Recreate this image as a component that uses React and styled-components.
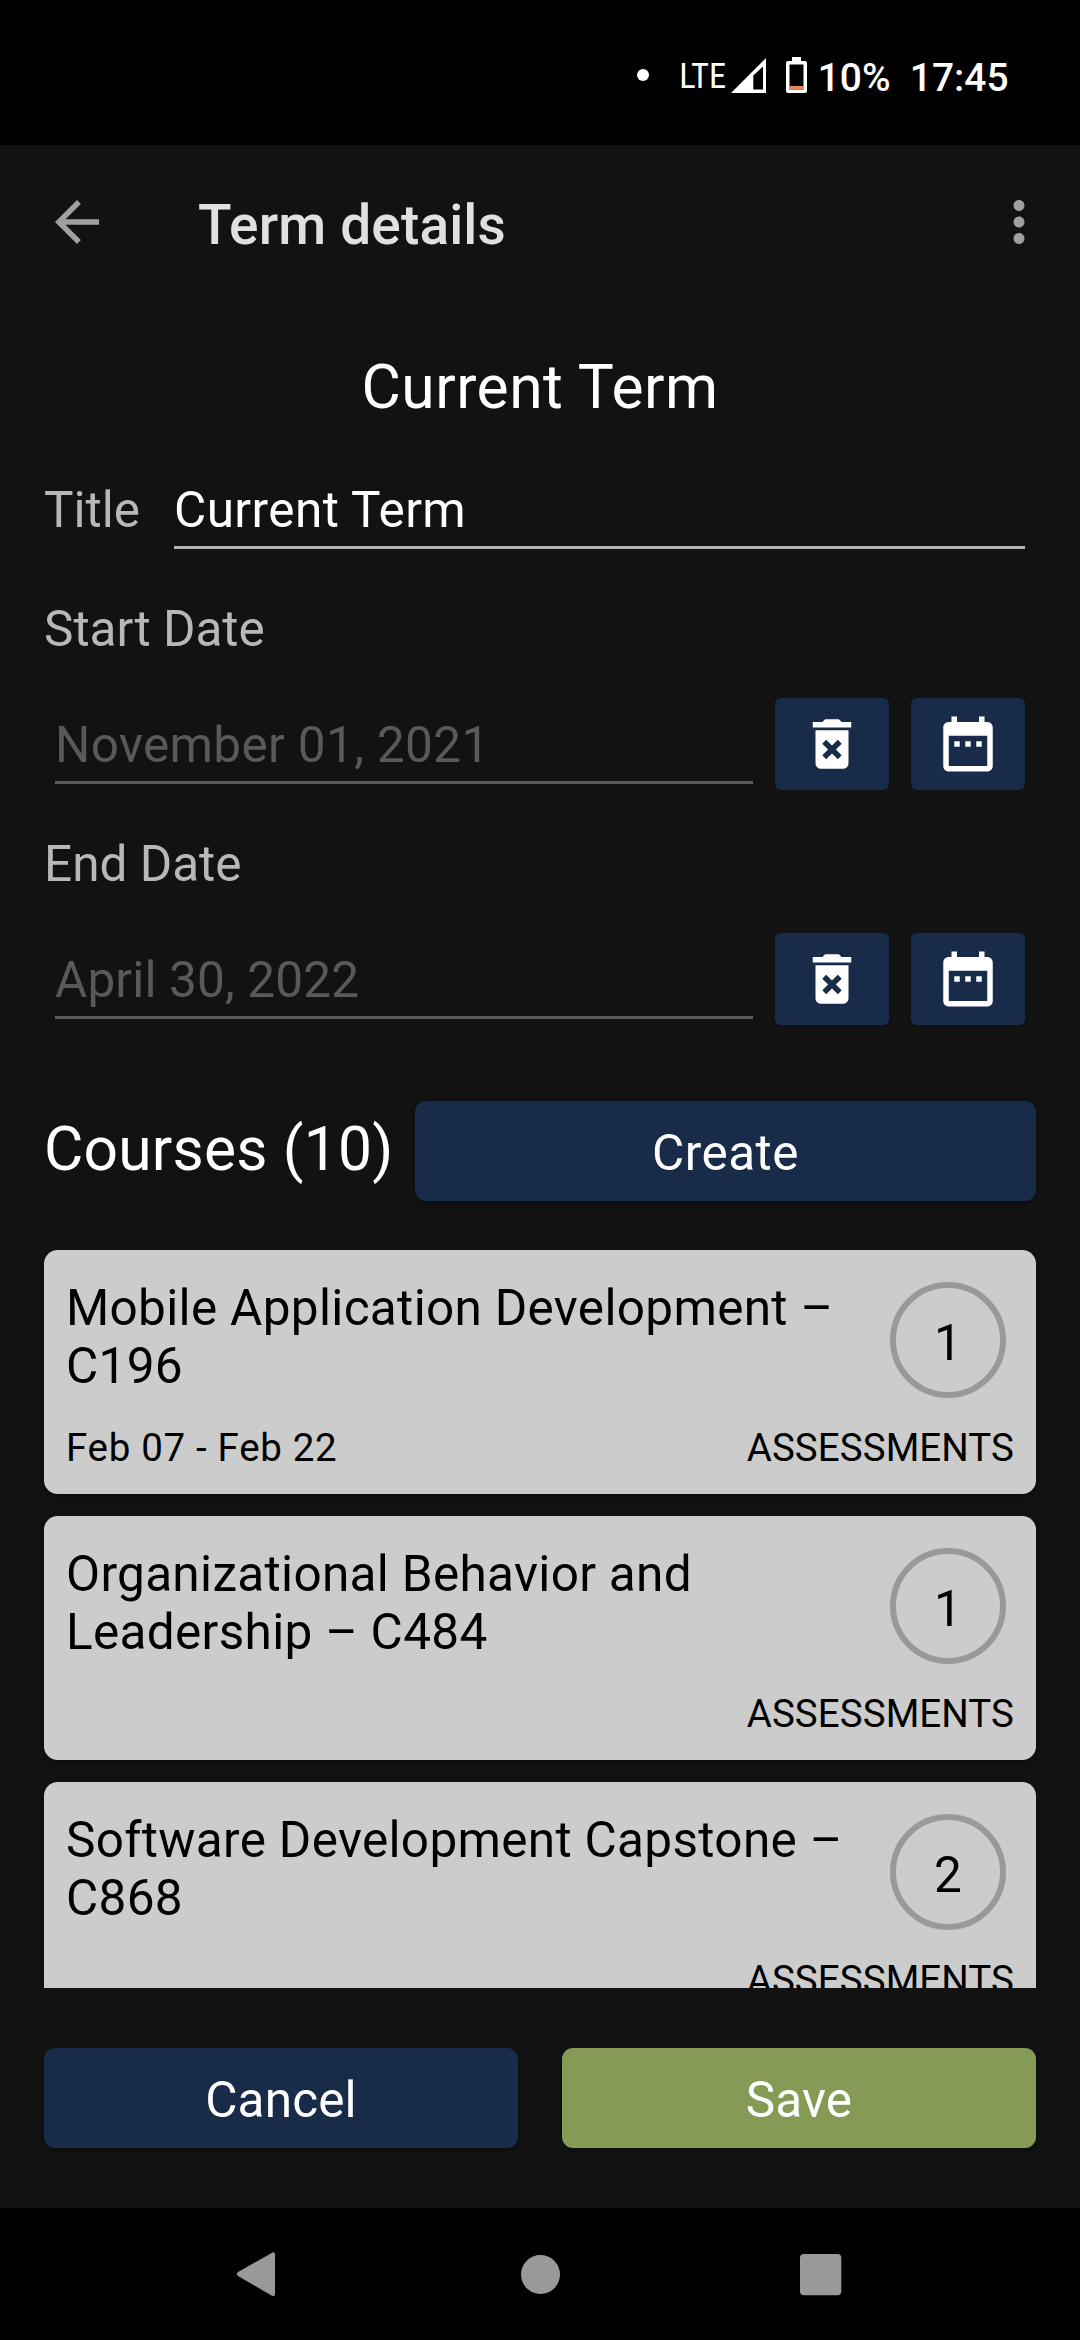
import React from "react";
import styled, { createGlobalStyle } from "styled-components";

const GlobalStyle = createGlobalStyle`
  * { box-sizing: border-box; }
  html, body { margin: 0; padding: 0; background: #000; }
  body { font-family: Roboto, "Liberation Sans", sans-serif; }
`;

const Screen = styled.div`
  width: 1080px;
  height: 2340px;
  display: flex;
  flex-direction: column;
  background: #121212;
  overflow: hidden;
`;

const StatusBar = styled.header`
  height: 145px;
  flex: none;
  background: #000;
  color: #fff;
  display: flex;
  align-items: flex-start;
  justify-content: flex-end;
  padding: 53px 71.5px 0 0;
`;

const StatusText = styled.span`
  font-size: 38.9px;
  line-height: 48px;
  font-weight: 500;
  white-space: nowrap;
  margin: 1px 0 0 ${(p) => p.$gap}px;
`;

const Dot = styled.i`
  width: 12px;
  height: 12px;
  border-radius: 50%;
  background: #fff;
  margin: 16px 30px 0 0;
`;

const Network = styled.span`
  width: 47px;
  font-family: "Roboto Condensed", Roboto, sans-serif;
  font-size: 34.5px;
  line-height: 40px;
  margin-top: 3px;
  white-space: nowrap;
`;

const Glyph = styled.svg`
  display: block;
  flex: none;
  width: ${(p) => p.$w}px;
  height: ${(p) => p.$h}px;
  margin: ${(p) => p.$m || "0"};
`;

const Toolbar = styled.div`
  height: 154px;
  flex: none;
  display: flex;
  align-items: center;
  padding: 0 28px 0 44px;
  color: #a0a0a0;
`;

const ToolbarTitle = styled.h1`
  flex: 1;
  margin: 6px 0 0 88px;
  font-size: 55px;
  line-height: 64px;
  font-weight: 500;
  letter-spacing: 0.15px;
  color: #e0e0e0;
`;

const Heading = styled.h2`
  margin: 53px 0 58px;
  font-size: 60.5px;
  line-height: 71px;
  font-weight: 400;
  letter-spacing: 0.5px;
  color: #fff;
  text-align: center;
`;

const Form = styled.section`
  flex: none;
  display: flex;
  flex-direction: column;
  padding: 0 55px 0 44px;
`;

const TitleRow = styled.div`
  display: flex;
  gap: 34px;
  height: 68px;
`;

const Label = styled.label`
  font-size: 49.5px;
  line-height: 58px;
  color: #b8b8b8;
`;

const Field = styled.div`
  flex: 1;
  height: 68px;
  font-size: 49.5px;
  line-height: 58px;
  letter-spacing: ${(p) => p.$track}px;
  color: ${(p) => (p.$muted ? "#595959" : "#fff")};
  border-bottom: 3px solid ${(p) => (p.$muted ? "#595959" : "#b5b5b5")};
`;

const DateGroup = styled.div`
  display: flex;
  flex-direction: column;
  padding-top: ${(p) => p.$top}px;
`;

const DateRow = styled.div`
  display: flex;
  gap: 22px;
  height: 92px;
  margin-top: 40px;
  padding-left: 11px;
  align-items: center;

  ${Field} { margin-top: 12px; }
`;

const IconButton = styled.button`
  width: 114px;
  height: 92px;
  padding: 0;
  border: 0;
  border-radius: 6px;
  background: #182c4a;
  color: #fff;
  display: flex;
  align-items: center;
  justify-content: center;
`;

const CoursesBar = styled.div`
  flex: none;
  display: flex;
  align-items: center;
  gap: 22px;
  margin: 76px 44px 49px;
`;

const CoursesTitle = styled.h2`
  margin: 0 0 3px;
  width: 349px;
  font-size: 60.5px;
  line-height: 71px;
  font-weight: 400;
  letter-spacing: 0.2px;
  color: #fff;
  white-space: nowrap;
`;

const Button = styled.button`
  flex: 1;
  height: 100px;
  padding: 4px 0 0;
  border: 0;
  border-radius: 11px;
  background: ${(p) => (p.$primary ? "#859a54" : "#182c4a")};
  color: #fff;
  font: 400 49.5px/58px Roboto, "Liberation Sans", sans-serif;
  letter-spacing: ${(p) => p.$track || 0.15}px;
  box-shadow: 0 3px 5px rgba(0, 0, 0, 0.3);
`;

const CourseList = styled.div`
  height: 738px;
  flex: none;
  padding: 0 44px;
  overflow: hidden;
  display: flex;
  flex-direction: column;
  gap: 22px;
`;

const Card = styled.article`
  flex: none;
  height: 244px;
  padding: 29px 22px 24px;
  border-radius: 13.75px;
  background: #ccc;
  color: #000;
  display: flex;
  flex-direction: column;
  justify-content: space-between;
  box-shadow: 0 3px 6px rgba(0, 0, 0, 0.35);
`;

const CardRow = styled.div`
  display: flex;
  justify-content: space-between;
`;

const CardTitle = styled.h3`
  margin: 0;
  width: 802px;
  font-size: 49.5px;
  line-height: 58px;
  font-weight: 400;
  letter-spacing: 0.32px;
`;

const CardText = styled.span`
  font-size: 38.5px;
  line-height: 45px;
  letter-spacing: ${(p) => p.$track}px;
`;

const Count = styled.div`
  width: 116px;
  height: 116px;
  margin: 3px 8px 0 0;
  padding-top: 6px;
  border: 6px solid #999;
  border-radius: 50%;
  display: flex;
  align-items: center;
  justify-content: center;
  font-size: 49.5px;
  line-height: 58px;
`;

const Footer = styled.footer`
  flex: 1;
  display: flex;
  align-items: flex-start;
  gap: 44px;
  padding: 60px 44px 0;
`;

const NavBar = styled.nav`
  height: 132px;
  flex: none;
  background: #000;
  color: #999;
  display: flex;
  align-items: center;
  justify-content: space-between;
  padding: 0 226px 0 223px;
`;

const DeleteIcon = () => (
  <Glyph $w={66} $h={66} viewBox="0 0 24 24" fill="currentColor">
    <path d="M6 19c0 1.1.9 2 2 2h8c1.1 0 2-.9 2-2V7H6v12zm2.46-7.12l1.41-1.41L12 12.59l2.12-2.12 1.41 1.41L13.41 14l2.12 2.12-1.41 1.41L12 15.41l-2.12 2.12-1.41-1.41L10.59 14l-2.13-2.12zM15.5 4l-1-1h-5l-1 1H5v2h14V4z" />
  </Glyph>
);

const CalendarIcon = () => (
  <Glyph $w={66} $h={66} viewBox="0 0 24 24" fill="currentColor">
    <path d="M9 11H7v2h2v-2zm4 0h-2v2h2v-2zm4 0h-2v2h2v-2zm2-7h-1V2h-2v2H8V2H6v2H5c-1.11 0-1.99.9-1.99 2L3 20c0 1.1.89 2 2 2h14c1.1 0 2-.9 2-2V6c0-1.1-.9-2-2-2zm0 16H5V9h14v11z" />
  </Glyph>
);

const DateField = ({ label, value, top, track }) => (
  <DateGroup $top={top}>
    <Label>{label}</Label>
    <DateRow>
      <Field $muted $track={track}>{value}</Field>
      <IconButton aria-label="Clear date"><DeleteIcon /></IconButton>
      <IconButton aria-label="Pick date"><CalendarIcon /></IconButton>
    </DateRow>
  </DateGroup>
);

const courses = [
  { title: "Mobile Application Development – C196", dates: "Feb 07 - Feb 22", count: 1 },
  { title: "Organizational Behavior and Leadership – C484", dates: "", count: 1 },
  { title: "Software Development Capstone – C868", dates: "", count: 2 },
];

export default function App() {
  return (
    <>
      <GlobalStyle />
      <Screen>
        <StatusBar>
          <Dot />
          <Network>LTE</Network>
          <Glyph $w={35} $h={35} $m="5px 20px 0 5px" viewBox="0 0 35 35">
            <path d="M0 35L35 0V35Z" fill="#fff" />
            <path d="M22.300 17.500L32 8.500V31.500H22.300Z" fill="#000" />
          </Glyph>
          <Glyph $w={21} $h={36} $m="4px 0 0 0" viewBox="0 0 21 36">
            <path d="M6 0H15V4H19Q21 4 21 6V34Q21 36 19 36H2Q0 36 0 34V6Q0 4 2 4H6Z" fill="#fff" />
            <path d="M3.500 7.500H17.500V32.500H3.500Z" fill="#000" />
            <path d="M3 29H18V32.500H3Z" fill="#f0805a" />
          </Glyph>
          <StatusText $gap={10.5}>10%</StatusText>
          <StatusText $gap={19.3}>17:45</StatusText>
        </StatusBar>

        <Toolbar>
          <Glyph $w={66} $h={66} viewBox="0 0 24 24" fill="currentColor">
            <path d="M20 11H7.83l5.59-5.59L12 4l-8 8 8 8 1.41-1.41L7.83 13H20v-2z" />
          </Glyph>
          <ToolbarTitle>Term details</ToolbarTitle>
          <Glyph $w={66} $h={66} viewBox="0 0 24 24" fill="currentColor">
            <path d="M12 8c1.1 0 2-.9 2-2s-.9-2-2-2-2 .9-2 2 .9 2 2 2zm0 2c-1.1 0-2 .9-2 2s.9 2 2 2 2-.9 2-2-.9-2-2-2zm0 6c-1.1 0-2 .9-2 2s.9 2 2 2 2-.9 2-2-.9-2-2-2z" />
          </Glyph>
        </Toolbar>

        <Heading>Current Term</Heading>

        <Form>
          <TitleRow>
            <Label>Title</Label>
            <Field $track={0.4}>Current Term</Field>
          </TitleRow>
          <DateField label="Start Date" value="November 01, 2021" top={51} track={0.36} />
          <DateField label="End Date" value="April 30, 2022" top={45} track={0.14} />
        </Form>

        <CoursesBar>
          <CoursesTitle>Courses (10)</CoursesTitle>
          <Button $track={0.45}>Create</Button>
        </CoursesBar>

        <CourseList>
          {courses.map((c) => (
            <Card key={c.title}>
              <CardRow>
                <CardTitle>{c.title}</CardTitle>
                <Count>{c.count}</Count>
              </CardRow>
              <CardRow>
                <CardText $track={0.68}>{c.dates}</CardText>
                <CardText $track={0.08}>ASSESSMENTS</CardText>
              </CardRow>
            </Card>
          ))}
        </CourseList>

        <Footer>
          <Button>Cancel</Button>
          <Button $primary>Save</Button>
        </Footer>

        <NavBar>
          <Glyph $w={66} $h={66} viewBox="0 0 66 66" fill="currentColor">
            <path d="M49.500 11.500Q52 10.500 52 13.500V52.500Q52 56.500 48.500 54.500L15 35Q12.500 33 15 31Z" />
          </Glyph>
          <Glyph $w={66} $h={66} viewBox="0 0 66 66" fill="currentColor">
            <circle cx="34.500" cy="33.500" r="19.500" />
          </Glyph>
          <Glyph $w={66} $h={66} viewBox="0 0 66 66" fill="currentColor">
            <rect x="12" y="13" width="41.300" height="41.300" rx="4" />
          </Glyph>
        </NavBar>
      </Screen>
    </>
  );
}
